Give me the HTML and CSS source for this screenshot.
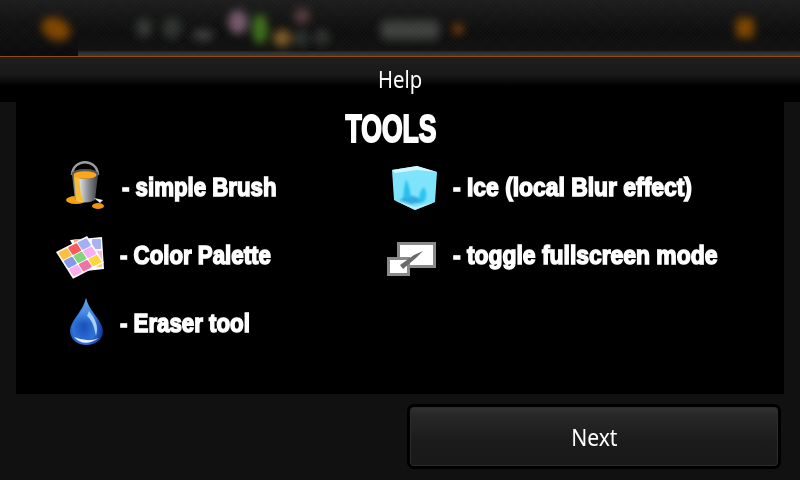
FILE: index.html
```html
<!DOCTYPE html>
<html lang="en">
<head>
    <meta charset="UTF-8">
    <meta name="viewport" content="width=device-width, initial-scale=1.0">
    <title>Help</title>
    <link rel="stylesheet" href="styles.css">
</head>
<body>
    <div class="toolbar">
        <div class="toolbar-active"></div>
        <svg class="toolbar-blobs" width="800" height="56" viewBox="0 0 800 56">
            <defs>
                <filter id="soft" x="-80%" y="-80%" width="260%" height="260%"><feGaussianBlur stdDeviation="4.500"/></filter>
            </defs>
            <g filter="url(#soft)">
                <ellipse cx="56" cy="29" rx="15" ry="11" fill="#7e4406" transform="rotate(25 56 29)"/>
                <ellipse cx="144" cy="28" rx="8" ry="10" fill="#343934"/>
                <ellipse cx="172" cy="28" rx="10" ry="11" fill="#2e322e"/>
                <ellipse cx="203" cy="35" rx="11" ry="6" fill="#3a3e3a"/>
                <ellipse cx="238" cy="22" rx="10" ry="12" fill="#74596c"/>
                <ellipse cx="260" cy="29" rx="8" ry="15" fill="#40701a"/>
                <ellipse cx="282" cy="38" rx="9" ry="9" fill="#7a5a28"/>
                <ellipse cx="302" cy="16" rx="8" ry="8" fill="#563a3c"/>
                <ellipse cx="301" cy="38" rx="8" ry="8" fill="#2c312d"/>
                <ellipse cx="322" cy="37" rx="8" ry="8" fill="#2e332e"/>
                <rect x="380" y="20" width="60" height="20" rx="8" fill="#3c413d"/>
                <ellipse cx="458" cy="29" rx="6" ry="6" fill="#6a3a08"/>
                <rect x="736" y="18" width="18" height="20" rx="4" fill="#7e4406"/>
            </g>
        </svg>
    </div>
    <div class="title-bar"><span class="title-text">Help</span></div>

    <div class="panel">
        <h1 class="panel-title">TOOLS</h1>
        <div class="tool-grid">
            <div class="tool">
                <svg class="tool-icon" width="66" height="60" viewBox="0 0 66 60">
                    <defs>
                        <linearGradient id="metal" x1="0" x2="1" y1="0" y2="0">
                            <stop offset="0" stop-color="#55575a"/>
                            <stop offset=".3" stop-color="#dcdee0"/>
                            <stop offset=".65" stop-color="#85888c"/>
                            <stop offset="1" stop-color="#3d3f42"/>
                        </linearGradient>
                    </defs>
                    <ellipse cx="20" cy="43" rx="10" ry="4" fill="#f4a012"/>
                    <ellipse cx="42" cy="49" rx="6" ry="3" fill="#ee9412"/>
                    <path d="M16 18 C17 1 41 1 42 18" fill="none" stroke="#9a9c9f" stroke-width="2.500"/>
                    <path d="M16 18 L19 43 Q29 48 39 43 L42 18 Z" fill="url(#metal)"/>
                    <ellipse cx="29" cy="17" rx="13.500" ry="5" fill="#55575a"/>
                    <ellipse cx="29" cy="18" rx="11.500" ry="3.800" fill="#f9a81a"/>
                    <path d="M18 19 L23 21 L25 38 L28 44 L20 44 Z" fill="#f8bb3c"/>
                    <path d="M38 41 L47 43 L44 46 Z" fill="#e8e8e8"/>
                </svg>
                <span class="tool-text">- simple Brush</span>
            </div>
            <div class="tool">
                <svg class="tool-icon" width="66" height="60" viewBox="0 0 66 60">
                    <defs>
                        <filter id="melt" x="-30%" y="-30%" width="160%" height="160%"><feGaussianBlur stdDeviation="1"/></filter>
                    </defs>
                    <path d="M5 13 L30 9 L50 15 L48 45 L28 53 L7 43 Z" fill="#7fe4fb"/>
                    <path d="M5 13 L30 9 L50 15 L30 13 L8 16 Z" fill="#d4f8fe"/>
                    <path d="M7 43 L28 53 L48 45 L28 50 Z" fill="#b6f0fc"/>
                    <g filter="url(#melt)">
                        <path d="M12 43 Q20 39 25 39 Q32 40 37 45 L24 47 Z" fill="#35a8e0"/>
                        <path d="M16 41 Q17 30 19 22 Q23 30 24 41 Z" fill="#2cc0ee"/>
                        <path d="M32 44 Q32 34 37 30 Q41 36 38 44 Z" fill="#2cc6f2"/>
                    </g>
                </svg>
                <span class="tool-text">- Ice (local Blur effect)</span>
            </div>
            <div class="tool">
                <svg class="tool-icon" width="64" height="60" viewBox="0 0 64 60">
                    <path d="M14 15 L46 12 L48 44 L30 46 Z" fill="#fbf6fb"/>
                    <rect x="18" y="14" width="12" height="6" fill="#f6a470" transform="rotate(-4 24 17)"/>
                    <rect x="36" y="14" width="9" height="10" rx="1" fill="#a8b2f0"/>
                    <rect x="38" y="26" width="8" height="9" rx="1" fill="#f6b6f0"/>
                    <rect x="38" y="36" width="8" height="6" rx="1" fill="#f9cf5c"/>
                    <g transform="matrix(9.7 -5 5.3 8.3 1.500 27.400)">
                        <rect x="-.1" y="-.1" width="3.200" height="3.200" fill="#fdfbff"/>
                        <rect x=".04" y=".04" width=".92" height=".92" rx=".14" fill="#fbc040"/>
                        <rect x="1.040" y=".04" width=".92" height=".92" rx=".14" fill="#f65c5c"/>
                        <rect x="2.040" y=".04" width=".92" height=".92" rx=".14" fill="#a4aef4"/>
                        <rect x=".04" y="1.040" width=".92" height=".92" rx=".14" fill="#8598ec"/>
                        <rect x="1.040" y="1.040" width=".92" height=".92" rx=".14" fill="#84d47c"/>
                        <rect x="2.040" y="1.040" width=".92" height=".92" rx=".14" fill="#f8aef2"/>
                        <rect x=".04" y="2.040" width=".92" height=".92" rx=".14" fill="#f8aeee"/>
                        <rect x="1.040" y="2.040" width=".92" height=".92" rx=".14" fill="#ee74a8"/>
                        <rect x="2.040" y="2.040" width=".92" height=".92" rx=".14" fill="#fcd63c"/>
                    </g>
                </svg>
                <span class="tool-text">- Color Palette</span>
            </div>
            <div class="tool">
                <svg class="tool-icon" width="66" height="60" viewBox="0 0 66 60">
                    <rect x="11.500" y="18.500" width="36" height="23" fill="#fff" stroke="#8a8a8a" stroke-width="3"/>
                    <rect x="1.500" y="33.500" width="20" height="16" fill="#fff" stroke="#8a8a8a" stroke-width="3"/>
                    <path d="M13 40 L16 44 L29 33 L36 26 L27 30 Z" fill="#6a6a6a"/>
                </svg>
                <span class="tool-text">- toggle fullscreen mode</span>
            </div>
            <div class="tool">
                <svg class="tool-icon" width="64" height="60" viewBox="0 0 64 60">
                    <defs>
                        <radialGradient id="drop" cx=".42" cy=".62" r=".62">
                            <stop offset="0" stop-color="#1a50b8"/>
                            <stop offset=".55" stop-color="#2f72d8"/>
                            <stop offset=".85" stop-color="#17419e"/>
                            <stop offset="1" stop-color="#0c2a78"/>
                        </radialGradient>
                        <linearGradient id="dropTop" x1="0" x2="0" y1="0" y2="1">
                            <stop offset="0" stop-color="#6fb4f4"/>
                            <stop offset="1" stop-color="#6fb4f4" stop-opacity="0"/>
                        </linearGradient>
                    </defs>
                    <path d="M30 5 C33 18 47 28 47 38 C47 47 39 52 30.500 52 C21 52 14 46 14 38 C14 28 27 18 30 5 Z" fill="url(#drop)"/>
                    <path d="M30 5 C33 18 42 24 43 30 L18 30 C20 24 27 18 30 5 Z" fill="url(#dropTop)"/>
                    <path d="M33 18 C39 26 43 32 40 43 C38 33 36 27 31 23 Z" fill="#a8d0fa"/>
                    <path d="M18 44 Q28 55 43 45 Q32 50 18 44 Z" fill="#eef2ff"/>
                </svg>
                <span class="tool-text">- Eraser tool</span>
            </div>
        </div>
    </div>

    <div class="footer">
        <button class="next-btn"><span class="next-text">Next</span></button>
    </div>
</body>
</html>
```

FILE: styles.css
```css
html, body { margin: 0; padding: 0; }
body { width: 800px; height: 480px; overflow: hidden; background: #111; font-family: "Noto Sans", sans-serif; color: #fff; }

.toolbar { position: relative; height: 56px; background: linear-gradient(#1d1d1d 0, #131413 30%, #0c0d0c 60%, #111 90%, #2a2a2a 93%, #3a3a3a 100%); overflow: hidden; }
.toolbar::after { content: ""; position: absolute; inset: 0; background: repeating-linear-gradient(45deg, rgba(255,255,255,.01) 0 1px, transparent 1px 3px), repeating-linear-gradient(-45deg, rgba(255,255,255,.01) 0 1px, transparent 1px 3px); }
.toolbar-active { position: absolute; left: 0; top: 0; bottom: 0; width: 78px; background: linear-gradient(#1d1d1d 0, #111 40%, #0a0a0a 100%); }
.toolbar-blobs { position: absolute; left: 0; top: 0; }

.title-bar { height: 45px; border-top: 1px solid #8f4c0c; background: linear-gradient(#1e1e1e 0, #191919 40%, #000 65%); line-height: 45px; text-align: center; }
.title-text { display: inline-block; font-size: 23px; transform: scaleX(.88); }

.panel { margin: 0 16px; height: 292px; background: #000; }
.panel-title { margin: 0 18px 0 0; height: 45px; padding-top: 7px; box-sizing: border-box; font-family: "Liberation Sans", sans-serif; font-size: 39px; line-height: 40px; font-weight: bold; text-align: center; transform: scaleX(.68); -webkit-text-stroke: 2px #fff; filter: blur(.3px); }

.tool-grid { display: grid; grid-template-columns: 331px 1fr; grid-auto-rows: 68px; padding: 6px 0 0 40px; }
.tool { display: flex; align-items: center; }
.tool-icon { flex: none; filter: blur(.4px); }
.tool-text { font-family: "Liberation Sans", sans-serif; font-size: 25px; font-weight: bold; transform: scaleX(.89); transform-origin: left center; -webkit-text-stroke: 1.5px #fff; filter: blur(.3px); white-space: nowrap; }
.tool:nth-child(even) .tool-text { transform: scaleX(.915); }

.footer { display: flex; justify-content: flex-end; padding: 10px 19px 0 0; }
.next-btn { width: 374px; height: 65px; box-sizing: border-box; border: 3px solid #000; border-radius: 7px; background: linear-gradient(#333 0, #272727 15%, #1c1b1b 60%, #1a1919 100%); box-shadow: inset 0 0 0 1px #2c2c2c; color: #fff; font-family: "Noto Sans", sans-serif; }
.next-text { display: inline-block; font-size: 24px; transform: scaleX(.88); }
```
